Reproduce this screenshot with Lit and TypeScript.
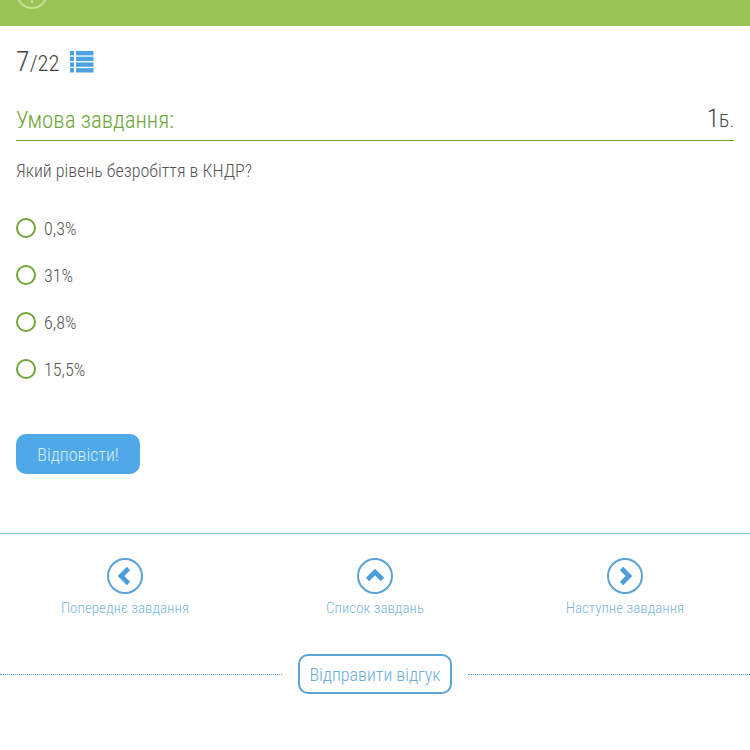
import { LitElement, html, svg, css } from "lit";
import { customElement } from "lit/decorators.js";

const chev = (d: string) => html`<svg class="nav-ico" viewBox="0 0 38 38" width="38" height="38"><circle cx="19" cy="19" r="17" fill="none" stroke="#5ba3d6" stroke-width="2"/><path d="${d}" fill="none" stroke="#4a9edb" stroke-width="4.6"/></svg>`;

@customElement("app-root")
export class AppRoot extends LitElement {
  static styles = css`
    :host { display: block; width: 750px; height: 750px; overflow: hidden; background: #fff; font-family: Roboto, "Liberation Sans", sans-serif; font-weight: 300; font-stretch: 75%; color: #444; }
    .top { height: 26px; background: #9ac455; overflow: hidden; padding-left: 16px; }
    .top svg { display: block; }
    .main { padding: 0 16px; }
    .count { display: flex; align-items: center; height: 32px; margin-top: 19px; gap: 10px; }
    .count-text { font-size: 22.5px; color: #444; }
    .count-text .big { font-size: 28px; }
    .list { margin-top: 2px; }
    .heading { display: flex; justify-content: space-between; align-items: flex-end; margin-top: 29px; height: 34px; width: 718px; border-bottom: 1px solid #6f9f3c; }
    .heading .title { font-size: 23px; color: #6fa63a; line-height: 28px; padding-bottom: 5px; }
    .score { font-size: 19px; line-height: 28px; padding-bottom: 5px; color: #444; }
    .score b { font-weight: 300; font-size: 25px; }
    .q { margin: 19px 0 0; font-size: 18px; line-height: 22px; color: #555; }
    .opts { margin-top: 36px; display: flex; flex-direction: column; gap: 27px; }
    .opt { display: flex; align-items: center; gap: 8px; height: 20px; font-size: 18px; color: #555; }
    .radio { width: 20px; height: 20px; box-sizing: border-box; border: 2.4px solid #6fa63a; border-radius: 50%; }
    .btn { display: flex; align-items: center; justify-content: center; margin-top: 55px; width: 124px; height: 40px; background: #4fa9e6; border-radius: 10px; color: #d9eefb; font-size: 18px; }
    .nav { margin-top: 59px; border-top: 1px solid #8cc8e6; height: 121px; display: grid; grid-template-columns: repeat(3, 1fr); padding-top: 23px; box-sizing: border-box; }
    .nav-item { display: flex; flex-direction: column; align-items: center; gap: 4px; color: #7ab7d8; font-size: 15px; line-height: 18px; }
    .nav-ico { display: block; }
    .foot { display: flex; align-items: center; justify-content: center; gap: 16px; height: 40px; }
    .dot { flex: 1; border-top: 1px dotted #4a9edb; }
    .fb { width: 154px; height: 40px; box-sizing: border-box; border: 2.4px solid #5ba3d6; border-radius: 10px; display: flex; align-items: center; justify-content: center; font-size: 18px; color: #6aaed6; }
  `;
  render() {
    const opts = ["0,3%", "31%", "6,8%", "15,5%"];
    const rows = [0, 5.7, 11.4, 17.1];
    return html`
      <div class="top"><svg width="32" height="26" viewBox="0 0 32 26"><circle cx="16" cy="-7" r="15" fill="none" stroke="#c6e09a" stroke-width="2"/><path d="M16 -2 V3" stroke="#c6e09a" stroke-width="2"/></svg></div>
      <div class="main">
        <div class="count">
          <span class="count-text"><span class="big">7</span>/22</span>
          <svg class="list" width="24" height="22" viewBox="0 0 24 22" fill="#4aa3e0">${rows.map((y) => svg`<rect x="0" y="${y}" width="4" height="4.4"/><rect x="6" y="${y}" width="17.5" height="4.4"/>`)}</svg>
        </div>
        <div class="heading"><span class="title">Умова завдання:</span><span class="score"><b>1</b>Б.</span></div>
        <p class="q">Який рівень безробіття в КНДР?</p>
        <div class="opts">${opts.map((o) => html`<div class="opt"><span class="radio"></span><span>${o}</span></div>`)}</div>
        <div class="btn">Відповісти!</div>
      </div>
      <div class="nav">
        <div class="nav-item">${chev("M22.5 11.5 L15 19 L22.5 26.5")}<span>Попереднє завдання</span></div>
        <div class="nav-item">${chev("M11.5 22.5 L19 15 L26.5 22.5")}<span>Список завдань</span></div>
        <div class="nav-item">${chev("M15.5 11.5 L23 19 L15.5 26.5")}<span>Наступне завдання</span></div>
      </div>
      <div class="foot"><span class="dot"></span><div class="fb">Відправити відгук</div><span class="dot"></span></div>
    `;
  }
}
